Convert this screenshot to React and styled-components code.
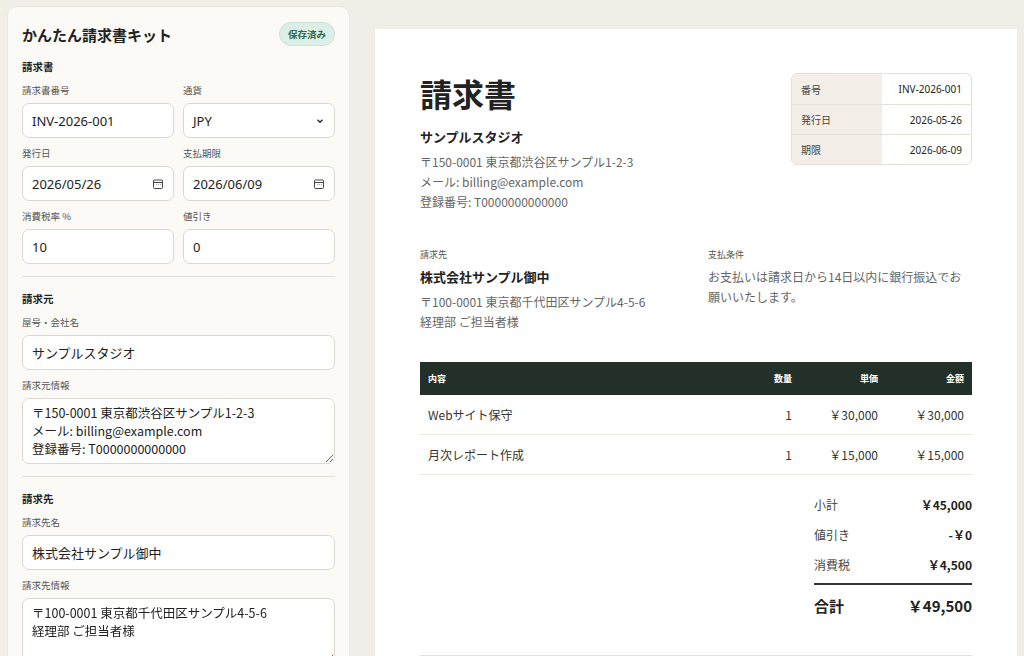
import React from "react";
import styled, { createGlobalStyle } from "styled-components";

const Global = createGlobalStyle`
  html, body { margin: 0; padding: 0; background: #f1eee8; }
  body { font-family: "Noto Sans CJK JP", "Noto Sans", sans-serif; color: #222; }
  * { box-sizing: border-box; }
`;

const Page = styled.div`
  display: flex; align-items: flex-start; gap: 25px;
  padding: 6px 7px 0 7px; height: 656px; overflow: hidden;
`;
const Side = styled.aside`
  width: 343px; flex: none; background: #fbfaf6; border-radius: 10px 10px 0 0;
  border: 1px solid #ebe7df; padding: 15px 14px 20px 14px; height: 700px;
`;
const Head = styled.div`display: flex; justify-content: space-between; align-items: center; margin-bottom: 13px;`;
const Title = styled.h1`font-size: 15px; font-weight: 600; margin: 0;`;
const Badge = styled.span`
  background: #dcefe6; color: #2f6b52; font-size: 9.5px; font-weight: 700;
  border-radius: 12px; padding: 4px 8px; border: 1px solid #c9e3d6;
`;
const Section = styled.h2`font-size: 10.5px; font-weight: 700; margin: 0 0 9px 0;`;
const Grid = styled.div`display: grid; grid-template-columns: 1fr 1fr; column-gap: 9px; row-gap: 8px;`;
const Field = styled.label`display: flex; flex-direction: column; gap: 6px;`;
const Label = styled.span`font-size: 9.5px; color: #555;`;
const Box = styled.div`
  height: ${p => p.$h || 35}px; border: 1px solid #dcd8d0; border-radius: 7px; background: #fff;
  display: flex; align-items: center; justify-content: space-between; padding: 0 9px;
  font-size: 13px; color: #222; font-family: "Noto Sans", "Noto Sans CJK JP", sans-serif;
`;
const Area = styled.textarea`
  height: ${p => p.$h}px; border: 1px solid #dcd8d0; border-radius: 7px; background: #fff;
  padding: 5px 9px; font-size: 12.5px; line-height: 18px; resize: vertical; color: #222;
  font-family: "Noto Sans CJK JP", sans-serif; width: 100%;
`;
const Divider = styled.hr`border: none; border-top: 1px solid #e2ded6; margin: 12px 0 14px;`;
const Stack = styled.div`display: flex; flex-direction: column; gap: 8px;`;

const Paper = styled.main`
  flex: 1; margin-top: 23px; background: #fff; height: 700px; padding: 44px 45px;
`;
const Top = styled.div`display: flex; justify-content: space-between; align-items: flex-start;`;
const Big = styled.div`font-size: 32px; font-weight: 700; line-height: 40px; margin-bottom: 14px;`;
const Org = styled.div`font-size: 13px; font-weight: 700; margin-bottom: 6px;`;
const Muted = styled.div`font-size: 12px; color: #666; line-height: 20px;`;
const Meta = styled.div`
  width: 181px; border: 1px solid #e4e0d8; border-radius: 6px; overflow: hidden;
`;
const MetaRow = styled.div`
  display: grid; grid-template-columns: 90px 1fr; height: 30px; font-size: 10px;
  & + & { border-top: 1px solid #e4e0d8; }
`;
const MetaK = styled.div`background: #f3efe8; padding: 0 9px; display: flex; align-items: center; color: #444;`;
const MetaV = styled.div`padding: 0 9px; display: flex; align-items: center; justify-content: flex-end; font-family: "Noto Sans", sans-serif;`;
const Parties = styled.div`display: grid; grid-template-columns: 288px 1fr; margin-top: 36px;`;
const Small = styled.div`font-size: 9px; color: #555; margin-bottom: 6px;`;
const Table = styled.div`margin-top: 30px;`;
const Row = styled.div`
  display: grid; grid-template-columns: 1fr 70px 86px 86px; align-items: center;
  height: ${p => (p.$head ? 33 : 40)}px; padding: 0 8px;
  background: ${p => (p.$head ? "#233029" : "#fff")};
  color: ${p => (p.$head ? "#fff" : "#333")};
  font-size: ${p => (p.$head ? 9 : 12)}px; font-weight: ${p => (p.$head ? 700 : 400)};
  border-bottom: ${p => (p.$head ? "none" : "1px solid #ebe8e2")};
  & > *:not(:first-child) { text-align: right; }
`;
const Totals = styled.div`margin-left: auto; width: 158px; margin-top: 14px;`;
const TRow = styled.div`
  display: flex; justify-content: space-between; align-items: center; height: 30px; font-size: 12px; color: #444;
  & > span:last-child { color: #222; font-weight: 600; }
`;
const Grand = styled(TRow)`
  border-top: 2px solid #333; margin-top: 4px; height: 42px; font-size: 15px; font-weight: 700; color: #222;
`;
const Foot = styled.hr`border: none; border-top: 1px solid #e4e0d8; margin: 30px 0 0;`;

const Cal = () => (
  <svg width="12" height="12" viewBox="0 0 24 24" fill="none" stroke="#444" strokeWidth="2">
    <rect x="3" y="4" width="18" height="17" rx="2" /><path d="M3 9h18M8 13h1M12 13h1M16 13h1" />
  </svg>
);
const Chev = () => (
  <svg width="10" height="10" viewBox="0 0 24 24" fill="none" stroke="#222" strokeWidth="3"><path d="M6 9l6 6 6-6" /></svg>
);

export default function App() {
  return (
    <>
      <Global />
      <Page>
        <Side>
          <Head><Title>かんたん請求書キット</Title><Badge>保存済み</Badge></Head>
          <Section>請求書</Section>
          <Grid>
            <Field><Label>請求書番号</Label><Box>INV-2026-001</Box></Field>
            <Field><Label>通貨</Label><Box>JPY<Chev /></Box></Field>
            <Field><Label>発行日</Label><Box>2026/05/26<Cal /></Box></Field>
            <Field><Label>支払期限</Label><Box>2026/06/09<Cal /></Box></Field>
            <Field><Label>消費税率 %</Label><Box>10</Box></Field>
            <Field><Label>値引き</Label><Box>0</Box></Field>
          </Grid>
          <Divider />
          <Section>請求元</Section>
          <Stack>
            <Field><Label>屋号・会社名</Label><Box>サンプルスタジオ</Box></Field>
            <Field><Label>請求元情報</Label>
              <Area $h={66} readOnly value={"〒150-0001 東京都渋谷区サンプル1-2-3\nメール: billing@example.com\n登録番号: T0000000000000\n"} />
            </Field>
          </Stack>
          <Divider />
          <Section>請求先</Section>
          <Stack>
            <Field><Label>請求先名</Label><Box>株式会社サンプル御中</Box></Field>
            <Field><Label>請求先情報</Label>
              <Area $h={66} readOnly value={"〒100-0001 東京都千代田区サンプル4-5-6\n経理部 ご担当者様"} />
            </Field>
          </Stack>
        </Side>
        <Paper>
          <Top>
            <div>
              <Big>請求書</Big>
              <Org>サンプルスタジオ</Org>
              <Muted>〒150-0001 東京都渋谷区サンプル1-2-3</Muted>
              <Muted>メール: billing@example.com</Muted>
              <Muted>登録番号: T0000000000000</Muted>
            </div>
            <Meta>
              <MetaRow><MetaK>番号</MetaK><MetaV>INV-2026-001</MetaV></MetaRow>
              <MetaRow><MetaK>発行日</MetaK><MetaV>2026-05-26</MetaV></MetaRow>
              <MetaRow><MetaK>期限</MetaK><MetaV>2026-06-09</MetaV></MetaRow>
            </Meta>
          </Top>
          <Parties>
            <div>
              <Small>請求先</Small>
              <Org>株式会社サンプル御中</Org>
              <Muted>〒100-0001 東京都千代田区サンプル4-5-6</Muted>
              <Muted>経理部 ご担当者様</Muted>
            </div>
            <div>
              <Small>支払条件</Small>
              <Muted>お支払いは請求日から14日以内に銀行振込でお願いいたします。</Muted>
            </div>
          </Parties>
          <Table>
            <Row $head><span>内容</span><span>数量</span><span>単価</span><span>金額</span></Row>
            <Row><span>Webサイト保守</span><span>1</span><span>￥30,000</span><span>￥30,000</span></Row>
            <Row><span>月次レポート作成</span><span>1</span><span>￥15,000</span><span>￥15,000</span></Row>
          </Table>
          <Totals>
            <TRow><span>小計</span><span>￥45,000</span></TRow>
            <TRow><span>値引き</span><span>-￥0</span></TRow>
            <TRow><span>消費税</span><span>￥4,500</span></TRow>
            <Grand><span>合計</span><span>￥49,500</span></Grand>
          </Totals>
          <Foot />
        </Paper>
      </Page>
    </>
  );
}
